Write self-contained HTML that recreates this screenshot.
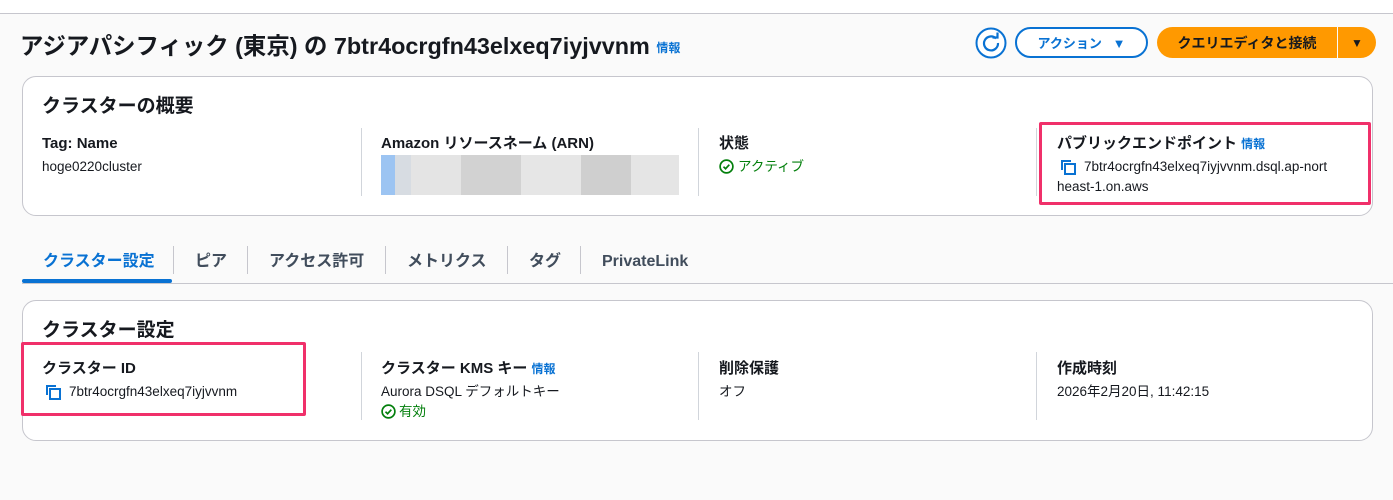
<!DOCTYPE html>
<html><head><meta charset="utf-8"><style>
*{box-sizing:border-box;margin:0;padding:0}
body{width:1393px;height:500px;background:#fafafa;font-family:"Liberation Sans","Noto Sans CJK JP",sans-serif;color:#16191f;position:relative;overflow:hidden}
.top{position:absolute;left:0;top:0;width:1393px;height:14px;background:#fff;border-bottom:1px solid #c6c6cd}
.abs{position:absolute;white-space:nowrap}
.title{left:20px;top:30px;font-size:23.4px;font-weight:bold;line-height:32px;height:32px}
.info{color:#0972d3;font-size:12px;font-weight:bold}
.card{position:absolute;left:22px;width:1351px;background:#fff;border:1px solid #c6c6cd;border-radius:14px}
.h2{font-size:19px;font-weight:bold;line-height:26px;height:26px}
.lbl{font-size:15px;font-weight:bold;line-height:20px;height:20px}
.val{font-size:13.5px;line-height:18px;height:18px}
.div{position:absolute;width:1px;background:#d1d5db}
.green{color:#037f0c}
.red{position:absolute;border:3px solid #f0306a;border-radius:2px}
.btn{position:absolute;height:31px;border-radius:16px;font-size:13px;font-weight:bold;display:flex;align-items:center;justify-content:center}
.tab{position:absolute;top:251px;font-size:16px;font-weight:bold;color:#414d5c;line-height:22px;height:22px}
.tsep{position:absolute;top:246px;width:1px;height:28px;background:#c6c6cd}
.copy{display:inline-block;vertical-align:middle;margin-right:8px}
</style></head><body>
<div class="top"></div>
<div class="abs title">アジアパシフィック (東京) の 7btr4ocrgfn43elxeq7iyjvvnm <span class="info" style="font-size:12px;vertical-align:middle">情報</span></div>

<svg class="abs" style="left:975px;top:27px" width="32" height="32" viewBox="0 0 32 32"><circle cx="16" cy="16" r="14.5" fill="#fff" stroke="#0972d3" stroke-width="2"/><path d="M21 11.5A7 7 0 1 0 23 16" fill="none" stroke="#0972d3" stroke-width="2.2"/><path d="M17.5 10.5h5v-5" fill="none" stroke="#0972d3" stroke-width="2.2"/></svg>
<div class="btn" style="left:1015px;top:27px;width:133px;border:2px solid #0972d3;color:#0972d3;background:#fff">アクション&nbsp;&nbsp;&nbsp;▼</div>
<div class="btn" style="left:1157px;top:27px;width:180px;background:#ff9900;border-radius:16px 0 0 16px;color:#16191f;font-size:14px">クエリエディタと接続</div>
<div class="btn" style="left:1338px;top:27px;width:38px;background:#ff9900;border-radius:0 16px 16px 0;color:#16191f;font-size:12px">▼</div>

<div class="card" style="top:76px;height:140px"></div>
<div class="abs h2" style="left:42px;top:94px">クラスターの概要</div>
<div class="div" style="left:361px;top:128px;height:68px"></div>
<div class="div" style="left:698px;top:128px;height:68px"></div>
<div class="div" style="left:1036px;top:128px;height:68px"></div>
<div class="abs lbl" style="left:42px;top:134px">Tag: Name</div>
<div class="abs val" style="left:42px;top:158px">hoge0220cluster</div>
<div class="abs lbl" style="left:381px;top:134px">Amazon リソースネーム (ARN)</div>
<div class="abs" style="left:381px;top:155px;width:298px;height:40px;background:linear-gradient(90deg,#9cc4f2 0 14px,#d7dce2 14px 30px,#e4e4e4 30px 80px,#d2d2d2 80px 140px,#e6e6e6 140px 200px,#cfcfcf 200px 250px,#e5e5e5 250px 298px)"></div>
<div class="abs lbl" style="left:719px;top:134px">状態</div>
<div class="abs val green" style="left:719px;top:158px"><svg class="copy" style="margin-right:4px;margin-top:-2px" width="15" height="15" viewBox="0 0 16 16"><circle cx="8" cy="8" r="6.8" fill="none" stroke="#037f0c" stroke-width="1.8"/><path d="M4.8 8.2l2.2 2.2 4-4.3" fill="none" stroke="#037f0c" stroke-width="1.8"/></svg>アクティブ</div>
<div class="red" style="left:1039px;top:122px;width:332px;height:83px"></div>
<div class="abs lbl" style="left:1057px;top:134px">パブリックエンドポイント <span class="info">情報</span></div>
<div class="abs val" style="left:1060px;top:158px"><svg class="copy" width="16" height="16" viewBox="0 0 16 16"><path d="M2 11V2h9" fill="none" stroke="#0972d3" stroke-width="2"/><rect x="5" y="5" width="10" height="10" fill="none" stroke="#0972d3" stroke-width="2"/></svg>7btr4ocrgfn43elxeq7iyjvvnm.dsql.ap-nort</div>
<div class="abs val" style="left:1057px;top:178px">heast-1.on.aws</div>

<div class="abs" style="left:22px;top:283px;width:1371px;height:1px;background:#c6c6cd"></div>
<div class="abs" style="left:22px;top:279px;width:150px;height:4px;background:#0972d3;border-radius:2px"></div>
<div class="tab" style="left:43px;color:#0972d3">クラスター設定</div>
<div class="tsep" style="left:173px"></div>
<div class="tab" style="left:195px">ピア</div>
<div class="tsep" style="left:247px"></div>
<div class="tab" style="left:269px">アクセス許可</div>
<div class="tsep" style="left:385px"></div>
<div class="tab" style="left:407px">メトリクス</div>
<div class="tsep" style="left:507px"></div>
<div class="tab" style="left:529px">タグ</div>
<div class="tsep" style="left:580px"></div>
<div class="tab" style="left:602px">PrivateLink</div>

<div class="card" style="top:300px;height:141px"></div>
<div class="abs h2" style="left:42px;top:318px">クラスター設定</div>
<div class="div" style="left:361px;top:352px;height:68px"></div>
<div class="div" style="left:698px;top:352px;height:68px"></div>
<div class="div" style="left:1036px;top:352px;height:68px"></div>
<div class="red" style="left:21px;top:342px;width:285px;height:74px"></div>
<div class="abs lbl" style="left:42px;top:359px">クラスター ID</div>
<div class="abs val" style="left:45px;top:383px"><svg class="copy" width="16" height="16" viewBox="0 0 16 16"><path d="M2 11V2h9" fill="none" stroke="#0972d3" stroke-width="2"/><rect x="5" y="5" width="10" height="10" fill="none" stroke="#0972d3" stroke-width="2"/></svg>7btr4ocrgfn43elxeq7iyjvvnm</div>
<div class="abs lbl" style="left:381px;top:359px">クラスター KMS キー <span class="info">情報</span></div>
<div class="abs val" style="left:381px;top:383px">Aurora DSQL デフォルトキー</div>
<div class="abs val green" style="left:381px;top:403px"><svg class="copy" style="margin-right:3px;margin-top:-2px" width="15" height="15" viewBox="0 0 16 16"><circle cx="8" cy="8" r="6.8" fill="none" stroke="#037f0c" stroke-width="1.8"/><path d="M4.8 8.2l2.2 2.2 4-4.3" fill="none" stroke="#037f0c" stroke-width="1.8"/></svg>有効</div>
<div class="abs lbl" style="left:719px;top:359px">削除保護</div>
<div class="abs val" style="left:719px;top:383px">オフ</div>
<div class="abs lbl" style="left:1057px;top:359px">作成時刻</div>
<div class="abs val" style="left:1057px;top:383px">2026年2月20日, 11:42:15</div>
</body></html>
